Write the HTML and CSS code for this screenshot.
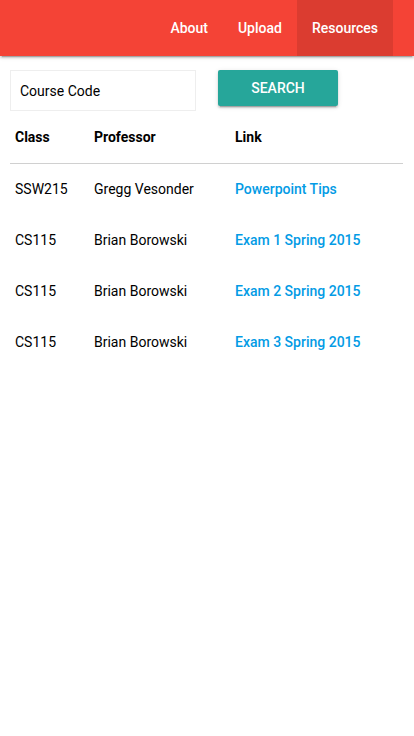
FILE: index.html
```html
<!DOCTYPE html>
<html>
<head>
<meta charset="utf-8">
<link rel="stylesheet" href="styles.css">
</head>
<body>
<nav class="nav">
  <ul class="nav-list">
    <li><a href="#">About</a></li>
    <li><a href="#">Upload</a></li>
    <li class="active"><a href="#">Resources</a></li>
  </ul>
</nav>
<main class="main">
  <div class="search">
    <input class="search-input" type="text" placeholder="Course Code">
    <button class="search-btn">SEARCH</button>
  </div>
  <table class="table">
    <thead>
      <tr><th class="c1">Class</th><th class="c2">Professor</th><th>Link</th></tr>
    </thead>
    <tbody>
      <tr><td>SSW215</td><td>Gregg Vesonder</td><td><a href="#">Powerpoint Tips</a></td></tr>
      <tr><td>CS115</td><td>Brian Borowski</td><td><a href="#">Exam 1 Spring 2015</a></td></tr>
      <tr><td>CS115</td><td>Brian Borowski</td><td><a href="#">Exam 2 Spring 2015</a></td></tr>
      <tr><td>CS115</td><td>Brian Borowski</td><td><a href="#">Exam 3 Spring 2015</a></td></tr>
    </tbody>
  </table>
</main>
</body>
</html>
```
FILE: styles.css
```css
* { box-sizing: border-box; }
body {
  margin: 0;
  font-family: Roboto, "Noto Sans", sans-serif;
  background: #fff;
  color: rgba(0,0,0,0.87);
}
.nav {
  height: 56px;
  background: #f44336;
  box-shadow: 0 2px 2px 0 rgba(0,0,0,0.14), 0 1px 5px 0 rgba(0,0,0,0.12), 0 3px 1px -2px rgba(0,0,0,0.2);
  display: flex;
  justify-content: flex-end;
  padding-right: 21px;
}
.nav-list {
  list-style: none;
  margin: 0;
  padding: 0;
  display: flex;
}
.nav-list li a {
  display: block;
  height: 56px;
  line-height: 56px;
  padding: 0 15px;
  color: #fff;
  text-decoration: none;
  font-size: 14px;
  font-weight: 500;
}
.nav-list li.active {
  background: rgba(0,0,0,0.1);
}
.main {
  padding: 14px 11px 0 10px;
}
.search {
  display: flex;
  align-items: flex-start;
  gap: 22px;
}
.search-input {
  width: 186px;
  height: 41px;
  border: 1px solid #eee;
  padding: 0 9px;
  font-family: inherit;
  font-size: 14px;
  color: #000;
  outline: none;
}
.search-input::placeholder { color: #000; }
.search-btn {
  width: 120px;
  height: 36px;
  border: none;
  border-radius: 2px;
  background: #26a69a;
  color: #fff;
  font-family: inherit;
  font-size: 14px;
  font-weight: 500;
  box-shadow: 0 2px 2px 0 rgba(0,0,0,0.14), 0 1px 5px 0 rgba(0,0,0,0.12), 0 3px 1px -2px rgba(0,0,0,0.2);
}
.table {
  width: 100%;
  border-collapse: collapse;
  margin-top: 1px;
  font-size: 14px;
}
.table th, .table td {
  padding: 15px 5px;
  line-height: 21px;
  text-align: left;
  color: #000;
}
.table th { font-weight: 700; }
.table thead tr { border-bottom: 1px solid #d0d0d0; }
.table .c1 { width: 79px; }
.table .c2 { width: 141px; }
.table a {
  color: #039be5;
  text-decoration: none;
  font-weight: 500;
}
```
